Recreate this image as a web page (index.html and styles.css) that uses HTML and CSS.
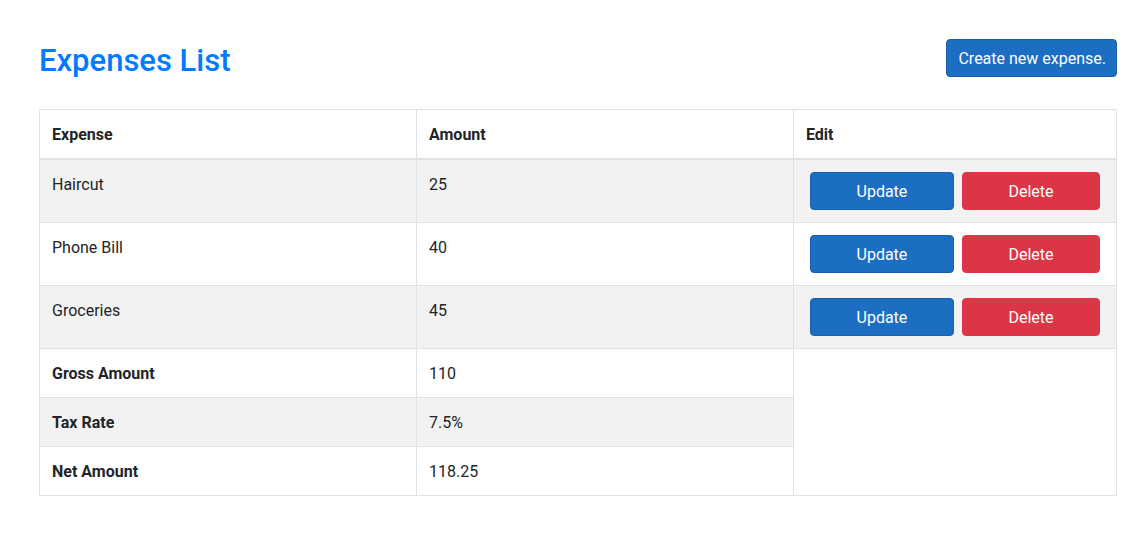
FILE: index.html
```html
<!DOCTYPE html>
<html lang="en">
<head>
<meta charset="utf-8">
<title>Expenses List</title>
<link rel="stylesheet" href="styles.css">
</head>
<body>
<main class="page">
  <header class="page-header">
    <h1 class="title">Expenses List</h1>
    <button class="btn btn-primary btn-create">Create new expense.</button>
  </header>
  <table class="table">
    <colgroup>
      <col class="col-a"><col class="col-b"><col class="col-c">
    </colgroup>
    <thead>
      <tr><th>Expense</th><th>Amount</th><th>Edit</th></tr>
    </thead>
    <tbody>
      <tr class="striped">
        <td>Haircut</td><td>25</td>
        <td><div class="actions"><button class="btn btn-primary">Update</button><button class="btn btn-danger">Delete</button></div></td>
      </tr>
      <tr>
        <td>Phone Bill</td><td>40</td>
        <td><div class="actions"><button class="btn btn-primary">Update</button><button class="btn btn-danger">Delete</button></div></td>
      </tr>
      <tr class="striped">
        <td>Groceries</td><td>45</td>
        <td><div class="actions"><button class="btn btn-primary">Update</button><button class="btn btn-danger">Delete</button></div></td>
      </tr>
      <tr>
        <td class="strong">Gross Amount</td><td>110</td>
        <td rowspan="3" class="empty"></td>
      </tr>
      <tr class="striped">
        <td class="strong">Tax Rate</td><td>7.5%</td>
      </tr>
      <tr>
        <td class="strong">Net Amount</td><td>118.25</td>
      </tr>
    </tbody>
  </table>
</main>
</body>
</html>
```

FILE: styles.css
```css
* { box-sizing: border-box; }
html, body { margin: 0; padding: 0; background: #fff; }
body {
  font-family: "Segoe UI", Roboto, "Open Sans", sans-serif;
  font-size: 16px;
  line-height: 1.5;
  color: #212529;
}
.page {
  padding: 39px 27px 40px 39px;
}
.page-header {
  display: flex;
  justify-content: space-between;
  align-items: flex-start;
  margin-bottom: 28px;
}
.title {
  margin: 2px 0 0;
  font-size: 31px;
  line-height: 40px;
  font-weight: 500;
  color: #007bff;
}
.btn {
  font-family: inherit;
  font-size: 16px;
  line-height: 24px;
  padding: 7px 12px 5px;
  border: 1px solid transparent;
  border-radius: 4px;
  color: #fff;
  cursor: pointer;
}
.btn-primary { background: #1b6ec2; border-color: #1861ac; }
.btn-danger { background: #dc3545; border-color: #dc3545; }
.btn-create { padding-left: 11px; padding-right: 10px; }
.table {
  width: 100%;
  border-collapse: collapse;
  table-layout: fixed;
}
.col-a, .col-b { width: 377px; }
.table th, .table td {
  border: 1px solid #dee2e6;
  padding: 13px 12px 11px;
  text-align: left;
  vertical-align: top;
}
.table th { font-weight: 700; border-bottom-width: 2px; }
.table td .actions { margin-top: -1px; margin-bottom: 1px; }
.table tr.striped td { background: #f2f2f2; }
.table td.empty { background: #fff; }
.strong { font-weight: 700; }
.actions {
  display: flex;
}
.actions .btn {
  flex: 1 1 auto;
  margin: 0 4px;
}
```
